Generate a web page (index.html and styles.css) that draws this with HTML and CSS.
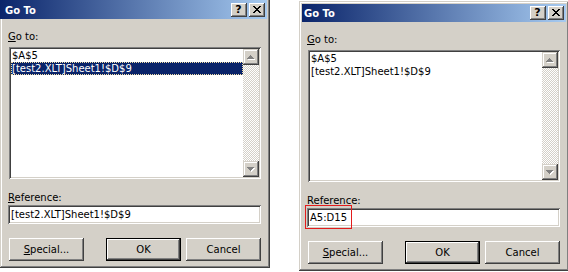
FILE: index.html
```html
<!DOCTYPE html>
<html lang="en">
<head>
<meta charset="utf-8">
<title>Go To</title>
<link rel="stylesheet" href="styles.css">
</head>
<body>
<div class="screen">
  <div class="dialog dialog--cropped">
    <div class="titlebar">
      <span class="title">Go To</span>
      <div class="caption-btns">
        <span class="cbtn cbtn--help">?</span>
        <span class="cbtn"><svg class="xicon" width="8" height="7" viewBox="0 0 8 7" shape-rendering="crispEdges"><path d="M0 0h2v1H0zM6 0h2v1H6zM1 1h2v1H1zM5 1h2v1H5zM2 2h4v1H2zM3 3h2v1H3zM2 4h4v1H2zM1 5h2v1H1zM5 5h2v1H5zM0 6h2v1H0zM6 6h2v1H6z" fill="#000"/></svg></span>
      </div>
    </div>
    <div class="body">
      <div class="label"><u>G</u>o to:</div>
      <div class="listbox">
        <ul class="items">
          <li>$A$5</li>
          <li class="selected">[test2.XLT]Sheet1!$D$9</li>
        </ul>
        <div class="scrollbar">
          <div class="sbtn"><svg width="8" height="5" viewBox="0 0 8 5" shape-rendering="crispEdges"><path d="M4 1h1v1H4zM3 2h3v1H3zM2 3h5v1H2zM1 4h7v1H1z" fill="#fff"/><path d="M3 0h1v1H3zM2 1h3v1H2zM1 2h5v1H1zM0 3h7v1H0z" fill="#808080"/></svg></div>
          <div class="track"></div>
          <div class="sbtn"><svg width="8" height="5" viewBox="0 0 8 5" shape-rendering="crispEdges"><path d="M1 1h7v1H1zM2 2h5v1H2zM3 3h3v1H3zM4 4h1v1H4z" fill="#fff"/><path d="M0 0h7v1H0zM1 1h5v1H1zM2 2h3v1H2zM3 3h1v1H3z" fill="#808080"/></svg></div>
        </div>
      </div>
      <div class="label label--ref"><u>R</u>eference:</div>
      <div class="textbox">[test2.XLT]Sheet1!$D$9</div>
      <div class="buttons">
        <button class="btn"><u>S</u>pecial...</button>
        <button class="btn btn--default">OK</button>
        <button class="btn btn--cancel">Cancel</button>
      </div>
    </div>
  </div>

  <div class="dialog dialog--right">
    <div class="titlebar">
      <span class="title">Go To</span>
      <div class="caption-btns">
        <span class="cbtn cbtn--help">?</span>
        <span class="cbtn"><svg class="xicon" width="8" height="7" viewBox="0 0 8 7" shape-rendering="crispEdges"><path d="M0 0h2v1H0zM6 0h2v1H6zM1 1h2v1H1zM5 1h2v1H5zM2 2h4v1H2zM3 3h2v1H3zM2 4h4v1H2zM1 5h2v1H1zM5 5h2v1H5zM0 6h2v1H0zM6 6h2v1H6z" fill="#000"/></svg></span>
      </div>
    </div>
    <div class="body">
      <div class="label"><u>G</u>o to:</div>
      <div class="listbox">
        <ul class="items">
          <li>$A$5</li>
          <li>[test2.XLT]Sheet1!$D$9</li>
        </ul>
        <div class="scrollbar">
          <div class="sbtn"><svg width="8" height="5" viewBox="0 0 8 5" shape-rendering="crispEdges"><path d="M4 1h1v1H4zM3 2h3v1H3zM2 3h5v1H2zM1 4h7v1H1z" fill="#fff"/><path d="M3 0h1v1H3zM2 1h3v1H2zM1 2h5v1H1zM0 3h7v1H0z" fill="#808080"/></svg></div>
          <div class="track"></div>
          <div class="sbtn"><svg width="8" height="5" viewBox="0 0 8 5" shape-rendering="crispEdges"><path d="M1 1h7v1H1zM2 2h5v1H2zM3 3h3v1H3zM4 4h1v1H4z" fill="#fff"/><path d="M0 0h7v1H0zM1 1h5v1H1zM2 2h3v1H2zM3 3h1v1H3z" fill="#808080"/></svg></div>
        </div>
      </div>
      <div class="label label--ref"><u>R</u>eference:</div>
      <div class="textbox textbox--marked">A5:D15<span class="mark"></span></div>
      <div class="buttons">
        <button class="btn"><u>S</u>pecial...</button>
        <button class="btn btn--default">OK</button>
        <button class="btn btn--cancel">Cancel</button>
      </div>
    </div>
  </div>
</div>
</body>
</html>
```

FILE: styles.css
```css
html, body {
  margin: 0;
  padding: 0;
  background: #fff;
  overflow: hidden;
}
body {
  width: 568px;
  height: 272px;
  font-family: "DejaVu Sans", "Liberation Sans", sans-serif;
  font-size: 10px;
  color: #000;
}
.screen {
  display: flex;
  align-items: flex-start;
  width: 568px;
}
.dialog {
  box-sizing: border-box;
  flex-shrink: 0;
  width: 270px;
  height: 270px;
  padding: 3px;
  background: #d4d0c8;
  box-shadow: inset -1px -1px #404040, inset 1px 1px #d4d0c8,
              inset -2px -2px #808080, inset 2px 2px #fff;
  display: flex;
  flex-direction: column;
}
.dialog--cropped {
  margin-top: -2px;
}
.dialog--right {
  margin-left: 29px;
  margin-top: 1px;
}
.titlebar {
  box-sizing: border-box;
  height: 18px;
  margin-bottom: 1px;
  padding-left: 2px;
  display: flex;
  align-items: center;
  background: linear-gradient(to right, #0a246a, #a6caf0);
  color: #fff;
  font-weight: bold;
}
.dialog--cropped .titlebar {
  height: 21px;
  margin: -3px 0 1px -3px;
  padding: 3px 0 0 5px;
}
.title {
  padding-top: 1px;
}
.caption-btns {
  margin-left: auto;
  margin-right: 2px;
  display: flex;
  gap: 2px;
}
.cbtn {
  box-sizing: border-box;
  width: 16px;
  height: 14px;
  background: #d4d0c8;
  box-shadow: inset -1px -1px #404040, inset 1px 1px #fff,
              inset -2px -2px #808080, inset 2px 2px #d4d0c8;
  display: flex;
  align-items: center;
  justify-content: center;
  color: #000;
}
.cbtn--help {
  font-weight: bold;
  font-size: 11px;
  line-height: 11px;
  padding: 0 1px 1px 0;
}
.xicon {
  display: block;
  margin: 0 1px 1px 0;
}
.body {
  padding: 10px 0 0 5px;
  display: flex;
  flex-direction: column;
}
.label {
  line-height: 13px;
  height: 13px;
}
.label--ref {
  margin-top: 12px;
}
.listbox {
  box-sizing: border-box;
  width: 252px;
  height: 132px;
  margin: 4px 0 0 1px;
  padding: 2px;
  background: #fff;
  box-shadow: inset 1px 1px #808080, inset -1px -1px #fff,
              inset 2px 2px #404040, inset -2px -2px #d4d0c8;
  display: flex;
}
.items {
  flex: 1;
  margin: 0;
  padding: 0;
  list-style: none;
}
.items li {
  height: 13px;
  line-height: 13px;
  padding-left: 1px;
  white-space: nowrap;
}
.items li.selected {
  background: #0a246a;
  color: #fff;
  outline: 1px dotted #f2dfa8;
  outline-offset: -1px;
}
.scrollbar {
  width: 16px;
  display: flex;
  flex-direction: column;
}
.sbtn {
  box-sizing: border-box;
  width: 16px;
  height: 16px;
  background: #d4d0c8;
  box-shadow: inset -1px -1px #404040, inset 1px 1px #d4d0c8,
              inset -2px -2px #808080, inset 2px 2px #fff;
  display: flex;
  align-items: center;
  justify-content: center;
}
.sbtn svg {
  display: block;
}
.track {
  flex: 1;
  background: repeating-conic-gradient(#d4d0c8 0 25%, #fff 0 50%) 0 0 / 2px 2px;
}
.textbox {
  position: relative;
  box-sizing: border-box;
  width: 253px;
  height: 19px;
  margin-top: 1px;
  padding: 2px 2px 0 3px;
  line-height: 15px;
  background: #fff;
  box-shadow: inset 1px 1px #808080, inset -1px -1px #fff,
              inset 2px 2px #404040, inset -2px -2px #d4d0c8;
  white-space: nowrap;
}
.mark {
  position: absolute;
  left: -2px;
  top: -3px;
  width: 47px;
  height: 24px;
  box-sizing: border-box;
  border: 1px solid #e31c1c;
}
.buttons {
  display: flex;
  margin-top: 14px;
  margin-left: 1px;
}
.btn {
  box-sizing: border-box;
  width: 75px;
  height: 23px;
  padding: 0;
  border: none;
  background: #d4d0c8;
  font: inherit;
  color: #000;
  box-shadow: inset -1px -1px #404040, inset 1px 1px #fff,
              inset -2px -2px #808080, inset 2px 2px #d4d0c8;
}
.btn--default {
  margin-left: 22px;
  border: 1px solid #000;
}
.btn--cancel {
  margin-left: 5px;
}
```
